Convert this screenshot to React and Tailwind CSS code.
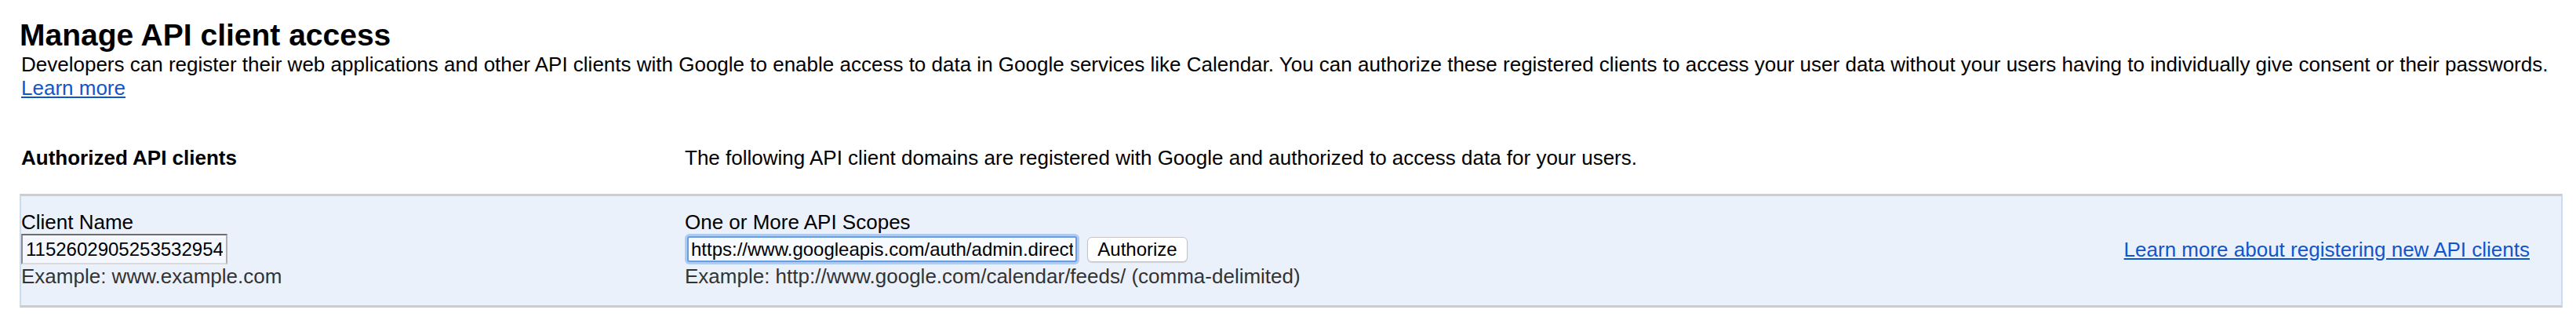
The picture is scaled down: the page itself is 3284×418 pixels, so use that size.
import React from "react";

function App() {
  return (
    <div className="min-h-screen bg-white pl-[25px] pr-[17px] font-['Liberation_Sans',Arial,sans-serif] text-[26px] leading-[30px] text-black">
      <h1 className="pt-[22px] text-[39px] font-bold leading-[45px]">
        Manage API client access
      </h1>
      <p className="pl-[2px]">
        <span className="whitespace-nowrap">
          Developers can register their web applications and other API clients
          with Google to enable access to data in Google services like Calendar.
          You can authorize these registered clients to access your user data
          without your users having to individually give consent or their
          passwords.
        </span>
        <br />
        <a href="#" className="text-[#1155cc] underline">
          Learn more
        </a>
      </p>

      <div className="mt-[59px] flex pl-[2px]">
        <div className="w-[846px] font-bold">Authorized API clients</div>
        <div>
          The following API client domains are registered with Google and
          authorized to access data for your users.
        </div>
      </div>

      <div className="mt-[31px] flex border-x-2 border-y-[3px] border-x-[#c9dbf2] border-y-[#cccccc] bg-[#ebf1fb] pt-[18px] pb-[22px] pr-[40px]">
        <div className="flex w-[846px] flex-col">
          <label>Client Name</label>
          <div className="flex h-[39px] items-center">
            <input
              readOnly
              defaultValue="115260290525353295412"
              className="h-[39px] w-[263px] border-2 border-t-[#6e6e6e] border-l-[#8c8c8c] border-r-[#b0b0b0] border-b-[#dadada] bg-[#f4f8fe] px-[4px] text-[24px] text-black outline-none"
            />
          </div>
          <span className="text-[#333333]">Example: www.example.com</span>
        </div>

        <div className="flex flex-col">
          <label>One or More API Scopes</label>
          <div className="flex h-[39px] items-center">
            <input
              readOnly
              defaultValue="https://www.googleapis.com/auth/admin.directory.user"
              className="ml-[3px] h-[33px] w-[497px] rounded-[3px] border-2 border-[#6a9de2] bg-[#f7faff] px-[3px] text-[24px] text-black shadow-[0_0_0_3px_#aecbf1] outline-none"
            />
            <button className="ml-[13px] h-[32px] w-[128px] rounded-[6px] border border-[#c4c4c4] bg-white text-[24px] leading-[28px] text-black shadow-[0_1px_1px_rgba(0,0,0,0.12)]">
              Authorize
            </button>
          </div>
          <span className="text-[#333333]">
            Example: http://www.google.com/calendar/feeds/ (comma-delimited)
          </span>
        </div>

        <div className="ml-auto self-center">
          <a href="#" className="text-[#1155cc] underline">
            Learn more about registering new API clients
          </a>
        </div>
      </div>
    </div>
  );
}

export default App;
